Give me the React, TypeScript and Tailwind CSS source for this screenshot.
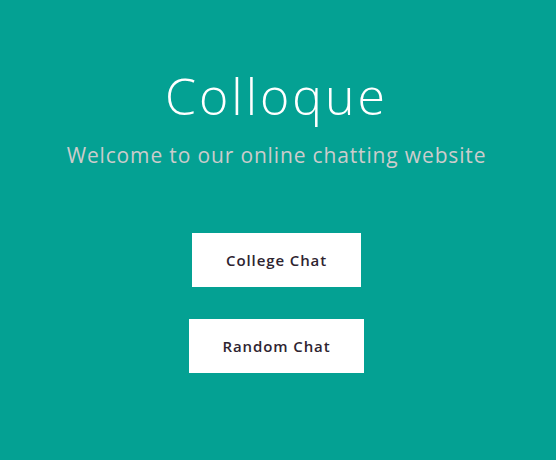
export default function App() {
  return (
    <div
      className="min-h-screen w-full bg-[#04a193] flex flex-col items-center pr-[3px]"
      style={{ fontFamily: '"Open Sans", "Liberation Sans", sans-serif' }}
    >
      <h1 className="mt-[62px] text-[50px] leading-[68px] text-white font-light tracking-[3px]">Colloque</h1>
      <p className="mt-[10px] text-[21px] leading-[30px] text-[#cccccc] font-normal tracking-[0.85px]">
        Welcome to our online chatting website
      </p>

      <div className="mt-[63px] flex flex-col items-center gap-8">
        <button className="h-[54px] w-[169px] bg-white text-[15px] font-semibold text-[#2e2430] tracking-[0.9px]">
          College Chat
        </button>
        <button className="h-[54px] w-[175px] bg-white text-[15px] font-semibold text-[#2e2430] tracking-[0.9px]">
          Random Chat
        </button>
      </div>
    </div>
  );
}
